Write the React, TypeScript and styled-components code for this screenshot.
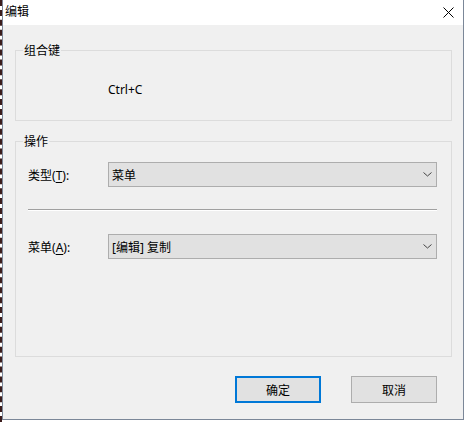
import React from "react";
import styled, { createGlobalStyle } from "styled-components";

const GlobalStyle = createGlobalStyle`
  html, body {
    margin: 0;
    padding: 0;
    background: #ffffff;
  }
  body {
    font-family: "Noto Sans", "Noto Sans CJK SC", sans-serif;
    font-size: 12px;
    color: #000;
  }
`;

interface ComboProps {
  label: string;
  hotkey: string;
  value: string;
}

const Chevron = () => (
  <svg width="9" height="5" viewBox="0 0 9 5">
    <polyline points="0.5,0.5 4.5,4 8.5,0.5" fill="none" stroke="#444" strokeWidth="1" />
  </svg>
);

const CloseIcon = () => (
  <svg width="11" height="11" viewBox="0 0 11 11">
    <path d="M0.5 0.5 L10.5 10.5 M10.5 0.5 L0.5 10.5" stroke="#000" strokeWidth="1" />
  </svg>
);

// one label + dropdown line inside the action group
const ComboRow = ({ label, hotkey, value }: ComboProps) => (
  <FieldRow>
    <FieldLabel>
      {label}(<u>{hotkey}</u>):
    </FieldLabel>
    <Combo>
      <span>{value}</span>
      <Chevron />
    </Combo>
  </FieldRow>
);

export default function App() {
  return (
    <>
      <GlobalStyle />
      <Screen>
        <Window>
          <TitleBar>
            <Title>编辑</Title>
            <CloseIcon />
          </TitleBar>
          <Client>
            <GroupBox $height={71}>
              <Caption>组合键</Caption>
              <Shortcut>Ctrl+C</Shortcut>
            </GroupBox>
            <GroupBox $height={216} $top={20}>
              <Caption>操作</Caption>
              <GroupBody>
                <ComboRow label="类型" hotkey="T" value="菜单" />
                <Separator />
                <ComboRow label="菜单" hotkey="A" value="[编辑] 复制" />
              </GroupBody>
            </GroupBox>
            <ButtonRow>
              <Button $primary>确定</Button>
              <Button>取消</Button>
            </ButtonRow>
          </Client>
        </Window>
      </Screen>
    </>
  );
}

const Screen = styled.div`
  width: 466px;
  height: 422px;
  overflow: hidden;
  display: flex;
  border-left: 2px dashed #3b1c1c;
  box-sizing: border-box;
`;
const Window = styled.div`
  width: 462px;
  height: 420px;
  box-sizing: border-box;
  border: 1px solid #7b8798;
  border-top: none;
  background: #f0f0f0;
  display: flex;
  flex-direction: column;
`;
const TitleBar = styled.div`
  height: 25px;
  background: #fff;
  display: flex;
  align-items: center;
  justify-content: space-between;
  padding: 0 9px 0 2px;
  flex-shrink: 0;
`;
const Title = styled.div`
  line-height: 16px;
  margin-top: -1px;
`;
const Client = styled.div`
  flex: 1;
  padding: 25px 11px 0 12px;
  display: flex;
  flex-direction: column;
`;
const GroupBox = styled.div<{ $height: number; $top?: number }>`
  position: relative;
  box-sizing: border-box;
  height: ${(p) => p.$height}px;
  margin-top: ${(p) => p.$top || 0}px;
  border: 1px solid #dcdcdc;
`;
const Caption = styled.span`
  position: absolute;
  top: -8px;
  left: 7px;
  padding: 0 1px;
  line-height: 15px;
  background: #f0f0f0;
`;
const Shortcut = styled.div`
  padding: 31px 0 0 92px;
  line-height: 16px;
`;
const GroupBody = styled.div`
  padding: 20px 14px 0 12px;
`;
const FieldRow = styled.div`
  display: flex;
  align-items: center;
  height: 25px;
`;
const FieldLabel = styled.div`
  width: 80px;
  flex-shrink: 0;
  u {
    text-decoration-thickness: 1px;
    text-underline-offset: 2px;
  }
`;
const Combo = styled.div`
  flex: 1;
  height: 25px;
  box-sizing: border-box;
  border: 1px solid #adadad;
  background: #e1e1e1;
  display: flex;
  align-items: center;
  justify-content: space-between;
  padding: 0 4px 0 3px;
`;
const Separator = styled.div`
  margin: 22px 0 23px;
  border-top: 1px solid #a0a0a0;
  border-bottom: 1px solid #ffffff;
`;
const ButtonRow = styled.div`
  margin-top: 19px;
  display: flex;
  justify-content: flex-end;
  gap: 30px;
  padding-right: 15px;
`;
const Button = styled.button<{ $primary?: boolean }>`
  width: 86px;
  height: 27px;
  box-sizing: border-box;
  background: #e1e1e1;
  border: ${(p) => (p.$primary ? "2px solid #0078d7" : "1px solid #adadad")};
  font: inherit;
  color: #000;
  padding: 0;
`;
